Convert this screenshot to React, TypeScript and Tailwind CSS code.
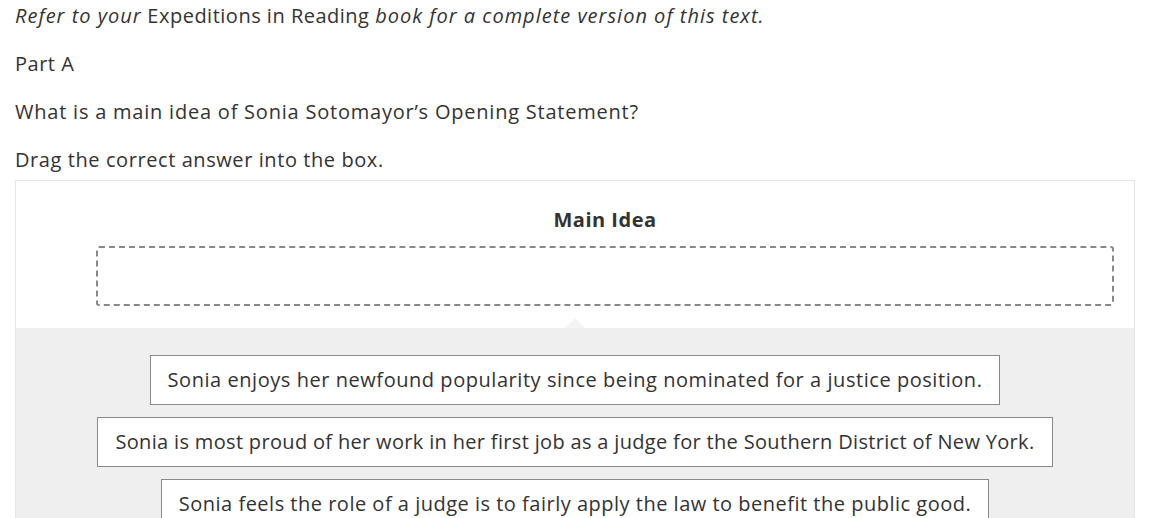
export default function App() {
  const options = [
    { text: "Sonia enjoys her newfound popularity since being nominated for a justice position.", track: "tracking-[0.55px]" },
    { text: "Sonia is most proud of her work in her first job as a judge for the Southern District of New York.", track: "tracking-[0.33px]" },
    { text: "Sonia feels the role of a judge is to fairly apply the law to benefit the public good.", track: "tracking-[0.5px]" },
  ];

  return (
    <div className="min-h-screen bg-white pl-[15px] pr-[34px] pt-[2px] font-['Open_Sans',sans-serif] text-[20px] tracking-[0.5px] text-[#333333]">
      <p className="leading-[28px]">
        <em className="tracking-[1px]">Refer to your</em> Expeditions in Reading{" "}
        <em className="tracking-[1px]">book for a complete version of this text.</em>
      </p>
      <p className="mt-[20px] leading-[28px]">Part A</p>
      <p className="mt-[20px] leading-[28px] tracking-[0.78px]">
        What is a main idea of Sonia Sotomayor’s Opening Statement?
      </p>
      <p className="mt-[20px] leading-[28px] tracking-[0.58px]">Drag the correct answer into the box.</p>

      {/* drop zone */}
      <div className="mt-[6px] border border-[#e6e6e6]">
        <div className="bg-white pl-[80px] pr-[20px] pt-[25px] pb-[22px]">
          <h3 className="text-center font-bold leading-[28px] text-[#333333]">Main Idea</h3>
          <div className="mt-[12px] h-[60px] rounded-[3px] border-2 border-dashed border-[#888888]" />
        </div>
        <div className="relative bg-[#efefef] pt-[27px]">
          <div className="absolute left-[549px] top-[-10px] h-0 w-0 border-x-[10px] border-b-[10px] border-x-transparent border-b-[#f4f4f4]" />
          <div className="flex flex-col items-center gap-[12px]">
            {options.map((o) => (
              <div
                key={o.text}
                className={`h-[50px] border border-[#8a8a8a] bg-white px-[17px] leading-[48px] whitespace-nowrap ${o.track}`}
              >
                {o.text}
              </div>
            ))}
          </div>
        </div>
      </div>
    </div>
  );
}
